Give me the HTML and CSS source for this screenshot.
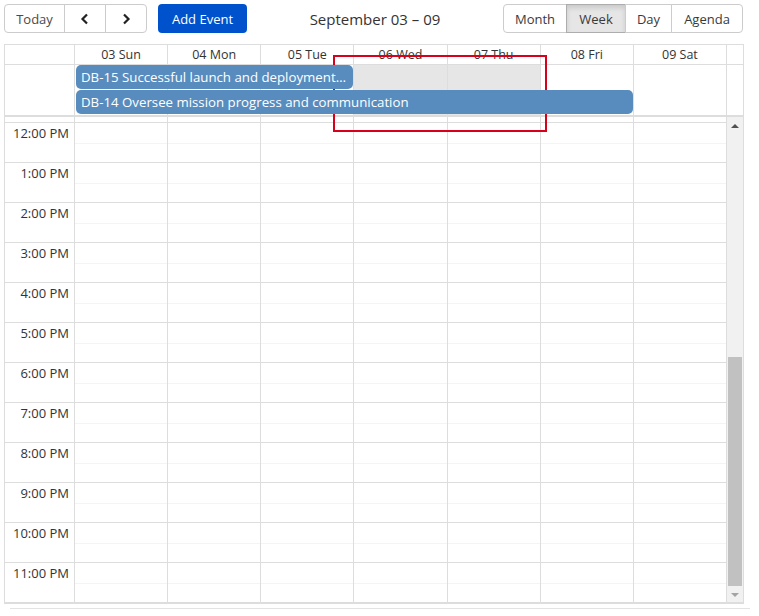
FILE: index.html
```html
<!DOCTYPE html>
<html>
<head>
<meta charset="utf-8">
<link rel="stylesheet" href="styles.css">
</head>
<body>
<div class="page">
  <div class="toolbar">
    <div class="btn-group">
      <button class="btn btn-today">Today</button>
      <button class="btn btn-nav" aria-label="Previous"><svg width="10" height="12" viewBox="0 0 10 12"><polyline points="7,1.5 2.5,6 7,10.5" fill="none" stroke="#222" stroke-width="2.2" stroke-linejoin="miter"/></svg></button>
      <button class="btn btn-nav" aria-label="Next"><svg width="10" height="12" viewBox="0 0 10 12"><polyline points="3,1.5 7.5,6 3,10.5" fill="none" stroke="#222" stroke-width="2.2" stroke-linejoin="miter"/></svg></button>
    </div>
    <button class="btn-add">Add Event</button>
    <div class="title">September 03 – 09</div>
    <div class="btn-group views">
      <button class="btn v-month">Month</button>
      <button class="btn v-week active">Week</button>
      <button class="btn v-day">Day</button>
      <button class="btn v-agenda">Agenda</button>
    </div>
  </div>

  <div class="calendar">
    <div class="head">
      <div class="gutter"></div>
      <div class="hcell">03 Sun</div>
      <div class="hcell">04 Mon</div>
      <div class="hcell">05 Tue</div>
      <div class="hcell">06 Wed</div>
      <div class="hcell">07 Thu</div>
      <div class="hcell">08 Fri</div>
      <div class="hcell">09 Sat</div>
      <div class="hspacer"></div>
    </div>

    <div class="allday">
      <div class="gutter ad-gutter"></div>
      <div class="ad-bg c1"></div>
      <div class="ad-bg c2"></div>
      <div class="ad-bg c3"></div>
      <div class="ad-bg c4 hl"></div>
      <div class="ad-bg c5 hl"></div>
      <div class="ad-bg c6"></div>
      <div class="ad-bg c7"></div>
      <div class="ad-spacer"></div>
      <div class="event ev1">DB-15 Successful launch and deployment…</div>
      <div class="event ev2">DB-14 Oversee mission progress and communication</div>
    </div>

    <div class="body">
      <div class="time-gutter">
        <div class="strip"></div>
        <div class="group"><span class="label">12:00 PM</span></div>
        <div class="group"><span class="label">1:00 PM</span></div>
        <div class="group"><span class="label">2:00 PM</span></div>
        <div class="group"><span class="label">3:00 PM</span></div>
        <div class="group"><span class="label">4:00 PM</span></div>
        <div class="group"><span class="label">5:00 PM</span></div>
        <div class="group"><span class="label">6:00 PM</span></div>
        <div class="group"><span class="label">7:00 PM</span></div>
        <div class="group"><span class="label">8:00 PM</span></div>
        <div class="group"><span class="label">9:00 PM</span></div>
        <div class="group"><span class="label">10:00 PM</span></div>
        <div class="group"><span class="label">11:00 PM</span></div>
      </div>
      <div class="day"></div>
      <div class="day"></div>
      <div class="day"></div>
      <div class="day"></div>
      <div class="day"></div>
      <div class="day"></div>
      <div class="day"></div>
      <div class="scrollbar">
        <div class="sb-btn sb-up"><span class="tri-up"></span></div>
        <div class="sb-track"><div class="sb-thumb"></div></div>
        <div class="sb-btn sb-down"><span class="tri-down"></span></div>
      </div>
    </div>
  </div>
  <div class="bottom-line"></div>
  <div class="annot"></div>
</div>
<script>
  // fill day columns with slot groups
  document.querySelectorAll('.day').forEach(function (d) {
    var html = '<div class="strip"></div>';
    for (var i = 0; i < 12; i++) html += '<div class="group"><div class="slot"></div><div class="slot s2"></div></div>';
    d.innerHTML = html;
  });
</script>
</body>
</html>
```

FILE: styles.css
```css
* { box-sizing: border-box; }
html, body { margin: 0; padding: 0; background: #fff; }
body {
  font-family: "Open Sans", "Noto Sans", sans-serif;
  color: #373a3c;
}
.page {
  position: relative;
  width: 759px;
  height: 616px;
  padding: 4px 0 0 4px;
}

/* toolbar */
.toolbar {
  display: flex;
  align-items: center;
  width: 740px;
  height: 29px;
  margin-bottom: 11px;
}
.btn-group { display: flex; }
.btn {
  font-family: inherit;
  font-size: 13px;
  color: #373a3c;
  background: #fff;
  border: 1px solid #ccc;
  height: 29px;
  padding: 0;
  margin: 0;
  display: flex;
  align-items: center;
  justify-content: center;
}
.btn + .btn { margin-left: -1px; }
.btn-group .btn:first-child { border-radius: 4px 0 0 4px; }
.btn-group .btn:last-child { border-radius: 0 4px 4px 0; }
.btn-today { width: 61px; color: #4a4a4a; }
.btn-nav { width: 42px; }
.btn-add {
  margin-left: 11px;
  width: 89px;
  height: 29px;
  border: 0;
  border-radius: 4px;
  background: #0052cc;
  color: #fff;
  font-family: inherit;
  font-size: 13px;
}
.title {
  flex: 1;
  text-align: center;
  font-size: 15px;
  color: #333;
}
.views { margin-right: 1px; }
.v-month { width: 64px; }
.v-week { width: 60px; }
.v-day { width: 47px; }
.v-agenda { width: 72px; }
.btn.active {
  background: #e6e6e6;
  border-color: #adadad;
  box-shadow: inset 0 3px 5px rgba(0,0,0,0.125);
}

/* calendar */
.calendar {
  width: 740px;
  border: 1px solid #ddd;
  font-size: 13px;
}
.head, .allday, .body {
  display: grid;
  grid-template-columns: 70px repeat(7, 1fr) 16px;
}
.head { height: 20px; }
.head .gutter { border-right: 1px solid #ddd; border-bottom: 1px solid #ddd; }
.hcell {
  border-right: 1px solid #ddd;
  border-bottom: 1px solid #ddd;
  text-align: center;
  font-size: 12.5px;
  line-height: 19px;
  color: #333;
}
.hspacer { border-bottom: 1px solid #ddd; }

.allday {
  grid-template-rows: 25px 25px;
  border-bottom: 2px solid #ddd;
}
.ad-gutter { grid-row: 1 / 3; grid-column: 1; border-right: 1px solid #ddd; }
.ad-bg { grid-row: 1 / 3; border-right: 1px solid #ddd; }
.ad-bg.c1 { grid-column: 2; }
.ad-bg.c2 { grid-column: 3; }
.ad-bg.c3 { grid-column: 4; }
.ad-bg.c4 { grid-column: 5; }
.ad-bg.c5 { grid-column: 6; }
.ad-bg.c6 { grid-column: 7; }
.ad-bg.c7 { grid-column: 8; }
.ad-bg.hl { background: #e6e6e6; }
.ad-spacer { grid-row: 1 / 3; grid-column: 9; }
.event {
  height: 24px;
  margin-left: 1px;
  margin-right: 1px;
  padding: 0 5px;
  background: #588cbe;
  color: #fff;
  border-radius: 5px;
  font-size: 13.25px;
  line-height: 24px;
  white-space: nowrap;
  z-index: 1;
}
.ev1 { grid-row: 1; grid-column: 2 / 5; }
.ev2 { grid-row: 2; grid-column: 2 / 8; }

.body { height: 486px; overflow: hidden; border-bottom: 1px solid #ddd; }
.time-gutter, .day { border-right: 1px solid #ddd; }
.strip { height: 6px; border-bottom: 1px solid #ddd; }
.group { height: 40px; border-bottom: 1px solid #ddd; }
.slot { height: 20px; }
.slot.s2 { border-top: 1px solid #f4f4f4; height: 19px; }
.time-gutter .group {
  text-align: right;
  padding-right: 5px;
  font-size: 13px;
  line-height: 20px;
  color: #333;
}

.scrollbar {
  display: flex;
  flex-direction: column;
  background: #f1f1f1;
}
.sb-btn {
  height: 17px;
  display: flex;
  align-items: center;
  justify-content: center;
}
.tri-up {
  width: 0; height: 0;
  border-left: 4px solid transparent;
  border-right: 4px solid transparent;
  border-bottom: 4px solid #505050;
}
.tri-down {
  width: 0; height: 0;
  border-left: 4px solid transparent;
  border-right: 4px solid transparent;
  border-top: 4px solid #a3a3a3;
}
.sb-track {
  flex: 1;
  display: flex;
  flex-direction: column;
  justify-content: flex-end;
  padding: 0 1px 0 1px;
}
.sb-thumb { height: 229px; background: #c1c1c1; }

.bottom-line {
  margin: 4px 0 0 6px;
  width: 740px;
  height: 1px;
  background: #e3e3e3;
}
.annot {
  position: absolute;
  left: 333px;
  top: 55px;
  width: 214px;
  height: 77px;
  border: 2px solid #d9001b;
  pointer-events: none;
}
```
